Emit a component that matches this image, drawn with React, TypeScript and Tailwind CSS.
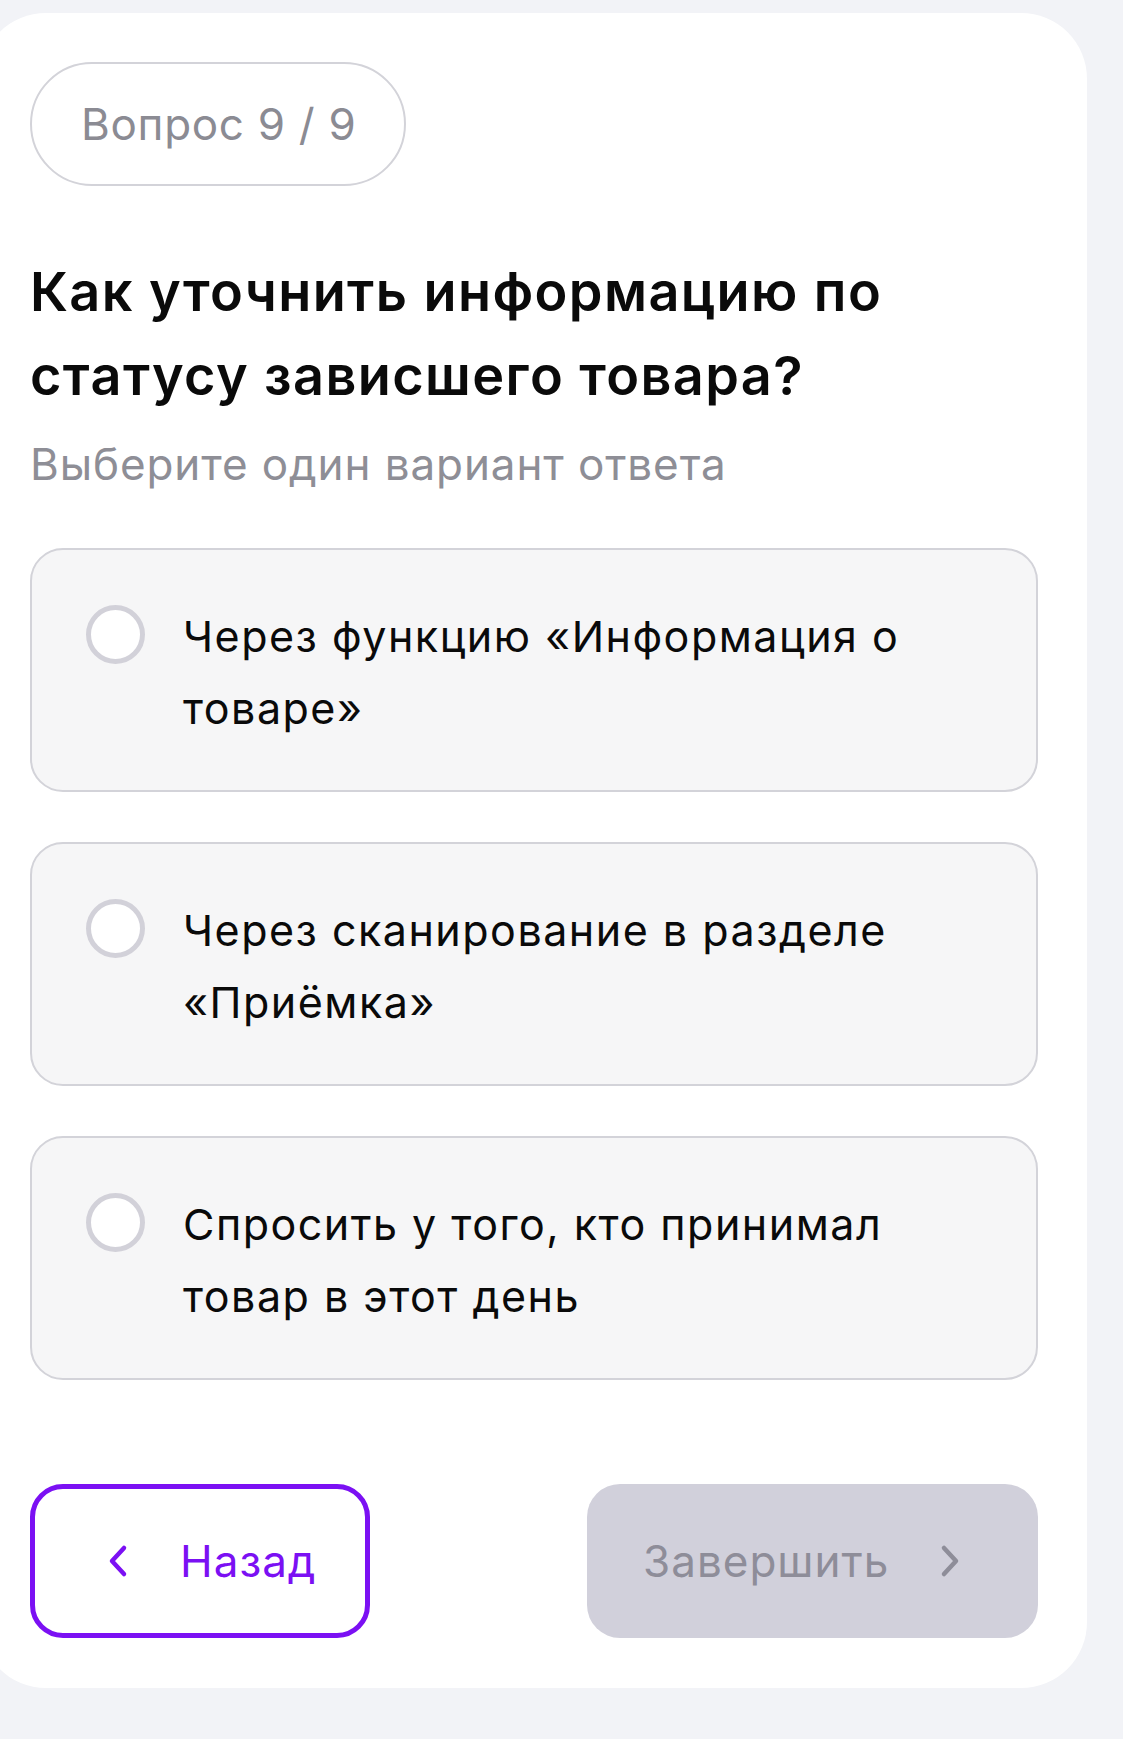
import React from "react";

const options = [
  "Через функцию «Информация о товаре»",
  "Через сканирование в разделе «Приёмка»",
  "Спросить у того, кто принимал товар в этот день",
];

function ChevronLeft({ className }: { className?: string }) {
  return (
    <svg viewBox="0 0 22 34" className={className} fill="none">
      <path d="M17 4 L5 17 L17 30" stroke="currentColor" strokeWidth="4.5" strokeLinecap="round" strokeLinejoin="round" />
    </svg>
  );
}

function ChevronRight({ className }: { className?: string }) {
  return (
    <svg viewBox="0 0 22 34" className={className} fill="none">
      <path d="M5 4 L17 17 L5 30" stroke="currentColor" strokeWidth="4.5" strokeLinecap="round" strokeLinejoin="round" />
    </svg>
  );
}

export default function App() {
  return (
    <div
      className="min-h-[1739px] w-[1123px] bg-[#f2f3f7] pt-[13px] overflow-hidden"
      style={{ fontFamily: "Inter, 'Noto Sans', sans-serif" }}
    >
      <div className="ml-[-20px] w-[1107px] rounded-[66px] bg-white pl-[50px] pr-[49px] pt-[49px] pb-[50px]">
        <div className="flex">
          <div className="flex h-[124px] w-[376px] items-center rounded-full border-2 border-[#d3d3d9] pl-[49px] text-[44px] leading-none tracking-[0.7px] text-[#8b8b93]">
            Вопрос 9 / 9
          </div>
        </div>

        <h1 className="mt-[64px] text-[54px] font-semibold leading-[84px] tracking-[1.4px] text-[#0a0a0a]">
          Как уточнить информацию по
          <br />
          статусу зависшего товара?
        </h1>
        <p className="mt-[18px] text-[44px] leading-[56px] tracking-[0.9px] text-[#8e8e96]">
          Выберите один вариант ответа
        </p>

        <div className="mt-[56px] flex flex-col gap-[50px]">
          {options.map((o) => (
            <div
              key={o}
              className="flex h-[244px] items-start rounded-[33px] border-2 border-[#d3d3d9] bg-[#f6f6f7] pl-[54px] pr-[40px] pt-[50px]"
            >
              <div className="mt-[5px] h-[59px] w-[59px] shrink-0 rounded-full border-[5px] border-[#d2d1d9] bg-white" />
              <div className="ml-[38px] max-w-[720px] text-[43px] leading-[72px] tracking-[1.5px] text-[#0a0a0a]">{o}</div>
            </div>
          ))}
        </div>

        <div className="mt-[104px] flex items-center justify-between">
          <button className="flex h-[154px] w-[340px] items-center rounded-[33px] border-[5px] border-[#7b10f3] bg-white pl-[72px] text-[#7b10f3]">
            <ChevronLeft className="h-[34px] w-[22px]" />
            <span className="ml-[51px] text-[44px] leading-none tracking-[1px]">Назад</span>
          </button>
          <button className="flex h-[154px] w-[451px] items-center rounded-[33px] bg-[#d1d0db] pl-[56px] text-[#8e8d99]">
            <span className="text-[44px] leading-none tracking-[1px]">Завершить</span>
            <ChevronRight className="ml-[50px] h-[34px] w-[22px]" />
          </button>
        </div>
      </div>
    </div>
  );
}
